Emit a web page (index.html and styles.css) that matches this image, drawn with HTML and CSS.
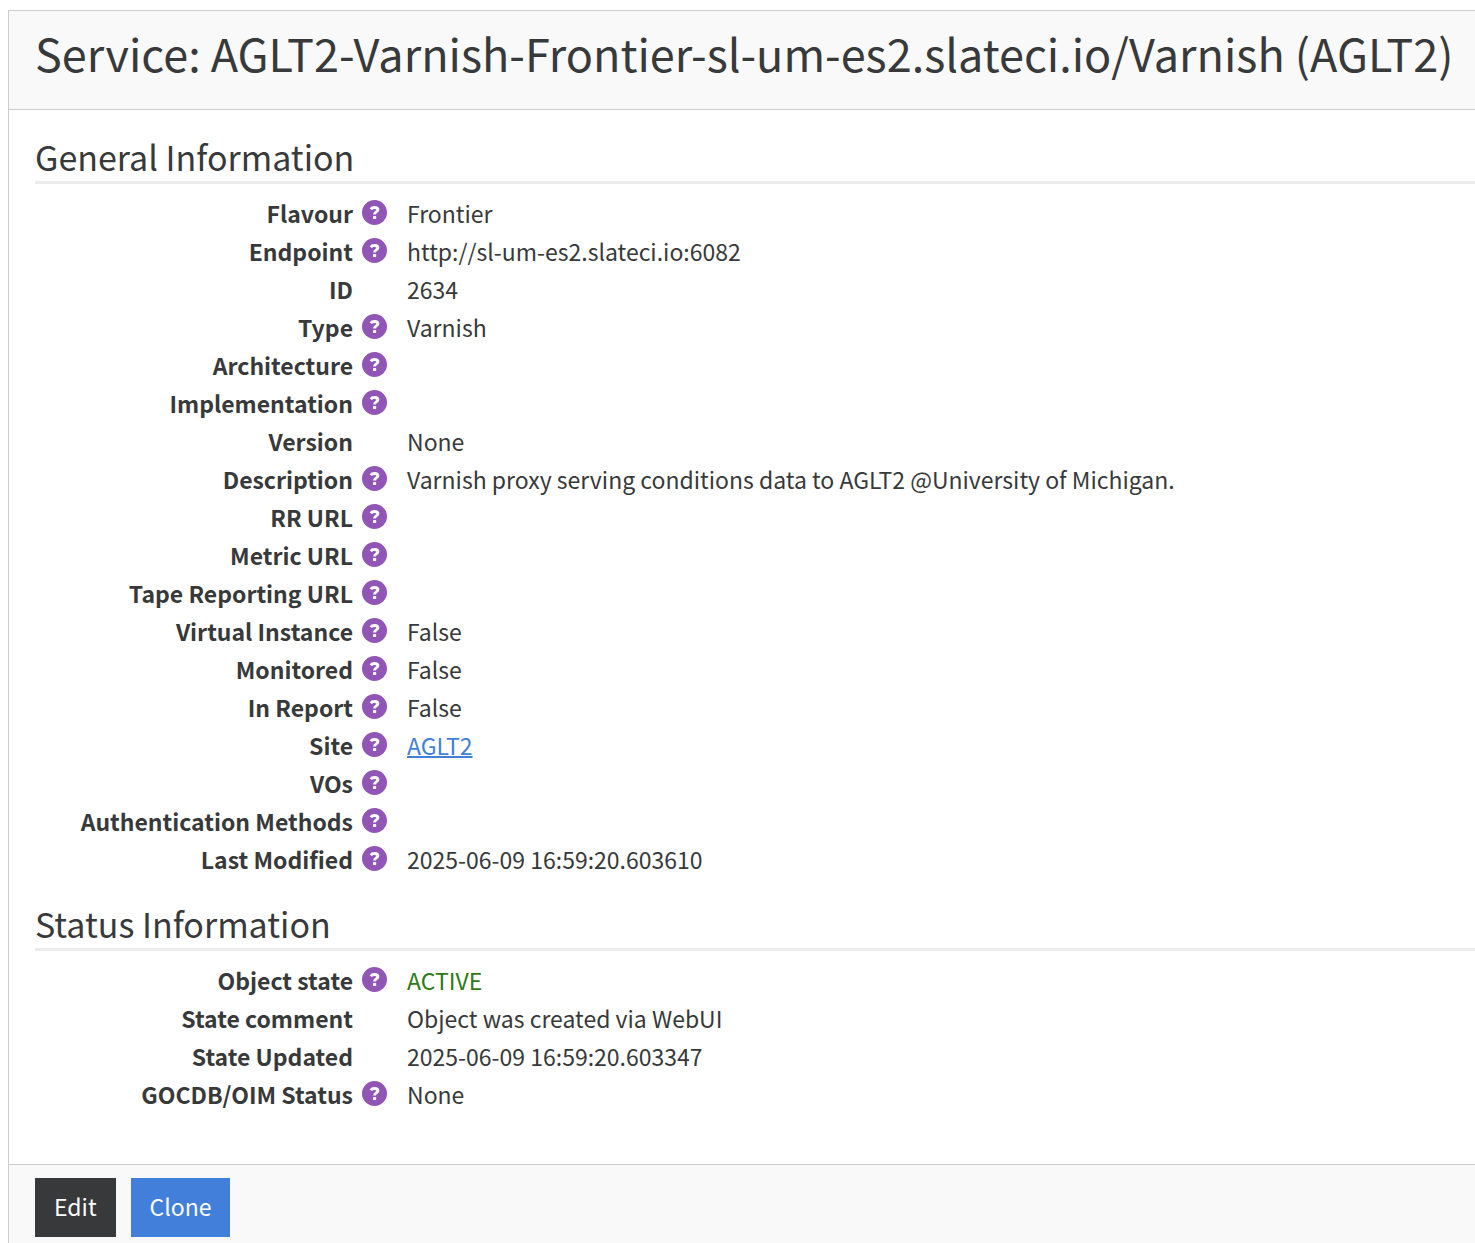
FILE: index.html
```html
<!DOCTYPE html>
<html lang="en">
<head>
<meta charset="utf-8">
<title>Service: AGLT2-Varnish-Frontier-sl-um-es2.slateci.io/Varnish (AGLT2)</title>
<link rel="stylesheet" href="styles.css">
</head>
<body>
<svg class="defs" aria-hidden="true"><symbol id="help" viewBox="0 0 25 25"><circle cx="12.500" cy="12.500" r="12.500" fill="currentColor"/><path d="M8.800 9.200C9.600 7.900 10.800 7.500 12.500 7.500c2 0 3.400.8 3.400 2.300 0 2.200-3.400 2-3.400 4.600" fill="none" stroke="#fff" stroke-width="2.900"/><rect x="11" y="15.900" width="3.200" height="3.200" rx=".8" fill="#fff"/></symbol></svg>
<article class="card">
<header class="card-header"><h1>Service: AGLT2-Varnish-Frontier-sl-um-es2.slateci.io/Varnish (AGLT2)</h1></header>
<div class="card-body">
<section>
<h2>General Information</h2>
<dl class="info">
<dt>Flavour</dt><dd><svg class="help"><use href="#help"/></svg>Frontier</dd>
<dt>Endpoint</dt><dd><svg class="help"><use href="#help"/></svg>http://sl-um-es2.slateci.io:6082</dd>
<dt>ID</dt><dd><span class="help"></span>2634</dd>
<dt>Type</dt><dd><svg class="help"><use href="#help"/></svg>Varnish</dd>
<dt>Architecture</dt><dd><svg class="help"><use href="#help"/></svg></dd>
<dt>Implementation</dt><dd><svg class="help"><use href="#help"/></svg></dd>
<dt>Version</dt><dd><span class="help"></span>None</dd>
<dt>Description</dt><dd><svg class="help"><use href="#help"/></svg>Varnish proxy serving conditions data to AGLT2 @University of Michigan.</dd>
<dt>RR URL</dt><dd><svg class="help"><use href="#help"/></svg></dd>
<dt>Metric URL</dt><dd><svg class="help"><use href="#help"/></svg></dd>
<dt>Tape Reporting URL</dt><dd><svg class="help"><use href="#help"/></svg></dd>
<dt>Virtual Instance</dt><dd><svg class="help"><use href="#help"/></svg>False</dd>
<dt>Monitored</dt><dd><svg class="help"><use href="#help"/></svg>False</dd>
<dt>In Report</dt><dd><svg class="help"><use href="#help"/></svg>False</dd>
<dt>Site</dt><dd><svg class="help"><use href="#help"/></svg><a href="#site">AGLT2</a></dd>
<dt>VOs</dt><dd><svg class="help"><use href="#help"/></svg></dd>
<dt>Authentication Methods</dt><dd><svg class="help"><use href="#help"/></svg></dd>
<dt>Last Modified</dt><dd><svg class="help"><use href="#help"/></svg>2025-06-09 16:59:20.603610</dd>
</dl>
</section>
<section>
<h2>Status Information</h2>
<dl class="info">
<dt>Object state</dt><dd><svg class="help"><use href="#help"/></svg><span class="active">ACTIVE</span></dd>
<dt>State comment</dt><dd><span class="help"></span>Object was created via WebUI</dd>
<dt>State Updated</dt><dd><span class="help"></span>2025-06-09 16:59:20.603347</dd>
<dt>GOCDB/OIM Status</dt><dd><svg class="help"><use href="#help"/></svg>None</dd>
</dl>
</section>
</div>
<footer class="card-footer"><button type="button" class="btn btn-dark">Edit</button><button type="button" class="btn btn-primary">Clone</button></footer>
</article>
</body>
</html>
```
FILE: styles.css
```css
* { box-sizing: border-box; }
body {
  margin: 0;
  padding: 10px 0 0 8px;
  background: #fff;
  color: #38393a;
  font: 23px/38px "Source Sans Pro", "Noto Sans CJK SC", sans-serif;
}
.defs { display: none; }
.card { border: 1px solid #cdcdcd; border-width: 1px 0 0 1px; }
.card-header { padding: 11px 0 25px 26px; background: #f9f9f9; border-bottom: 1px solid #cdcdcd; }
h1, h2 { margin: 0; font-weight: 400; }
h1 { font-size: 45px; line-height: 62px; }
.card-body { padding: 26px 0 51px 26px; }
h2 { margin-bottom: 10px; padding-bottom: 3px; border-bottom: 3px solid #ececec; font-size: 34px; line-height: 42px; }
section + section { margin-top: 25px; }
.info { display: grid; grid-template-columns: 318px 1fr; column-gap: 9px; margin: 0; }
dt { font-weight: 700; text-align: right; }
dd { display: flex; align-items: center; min-height: 38px; margin: 0; }
.help { flex: none; width: 25px; height: 25px; margin: 0 20px 1px 0; color: #9055b5; }
a { color: #427fdb; text-decoration-thickness: 2px; }
.active { color: #2d7a16; }
.card-footer { display: flex; gap: 15px; padding: 13px 26px 20px; border-top: 1px solid #cdcdcd; background: #f9f9f9; }
.btn { padding: 9px 19px 12px; border: 0; color: #fff; font: inherit; }
.btn-dark { background: #38393a; }
.btn-primary { background: #427fdb; }
```
